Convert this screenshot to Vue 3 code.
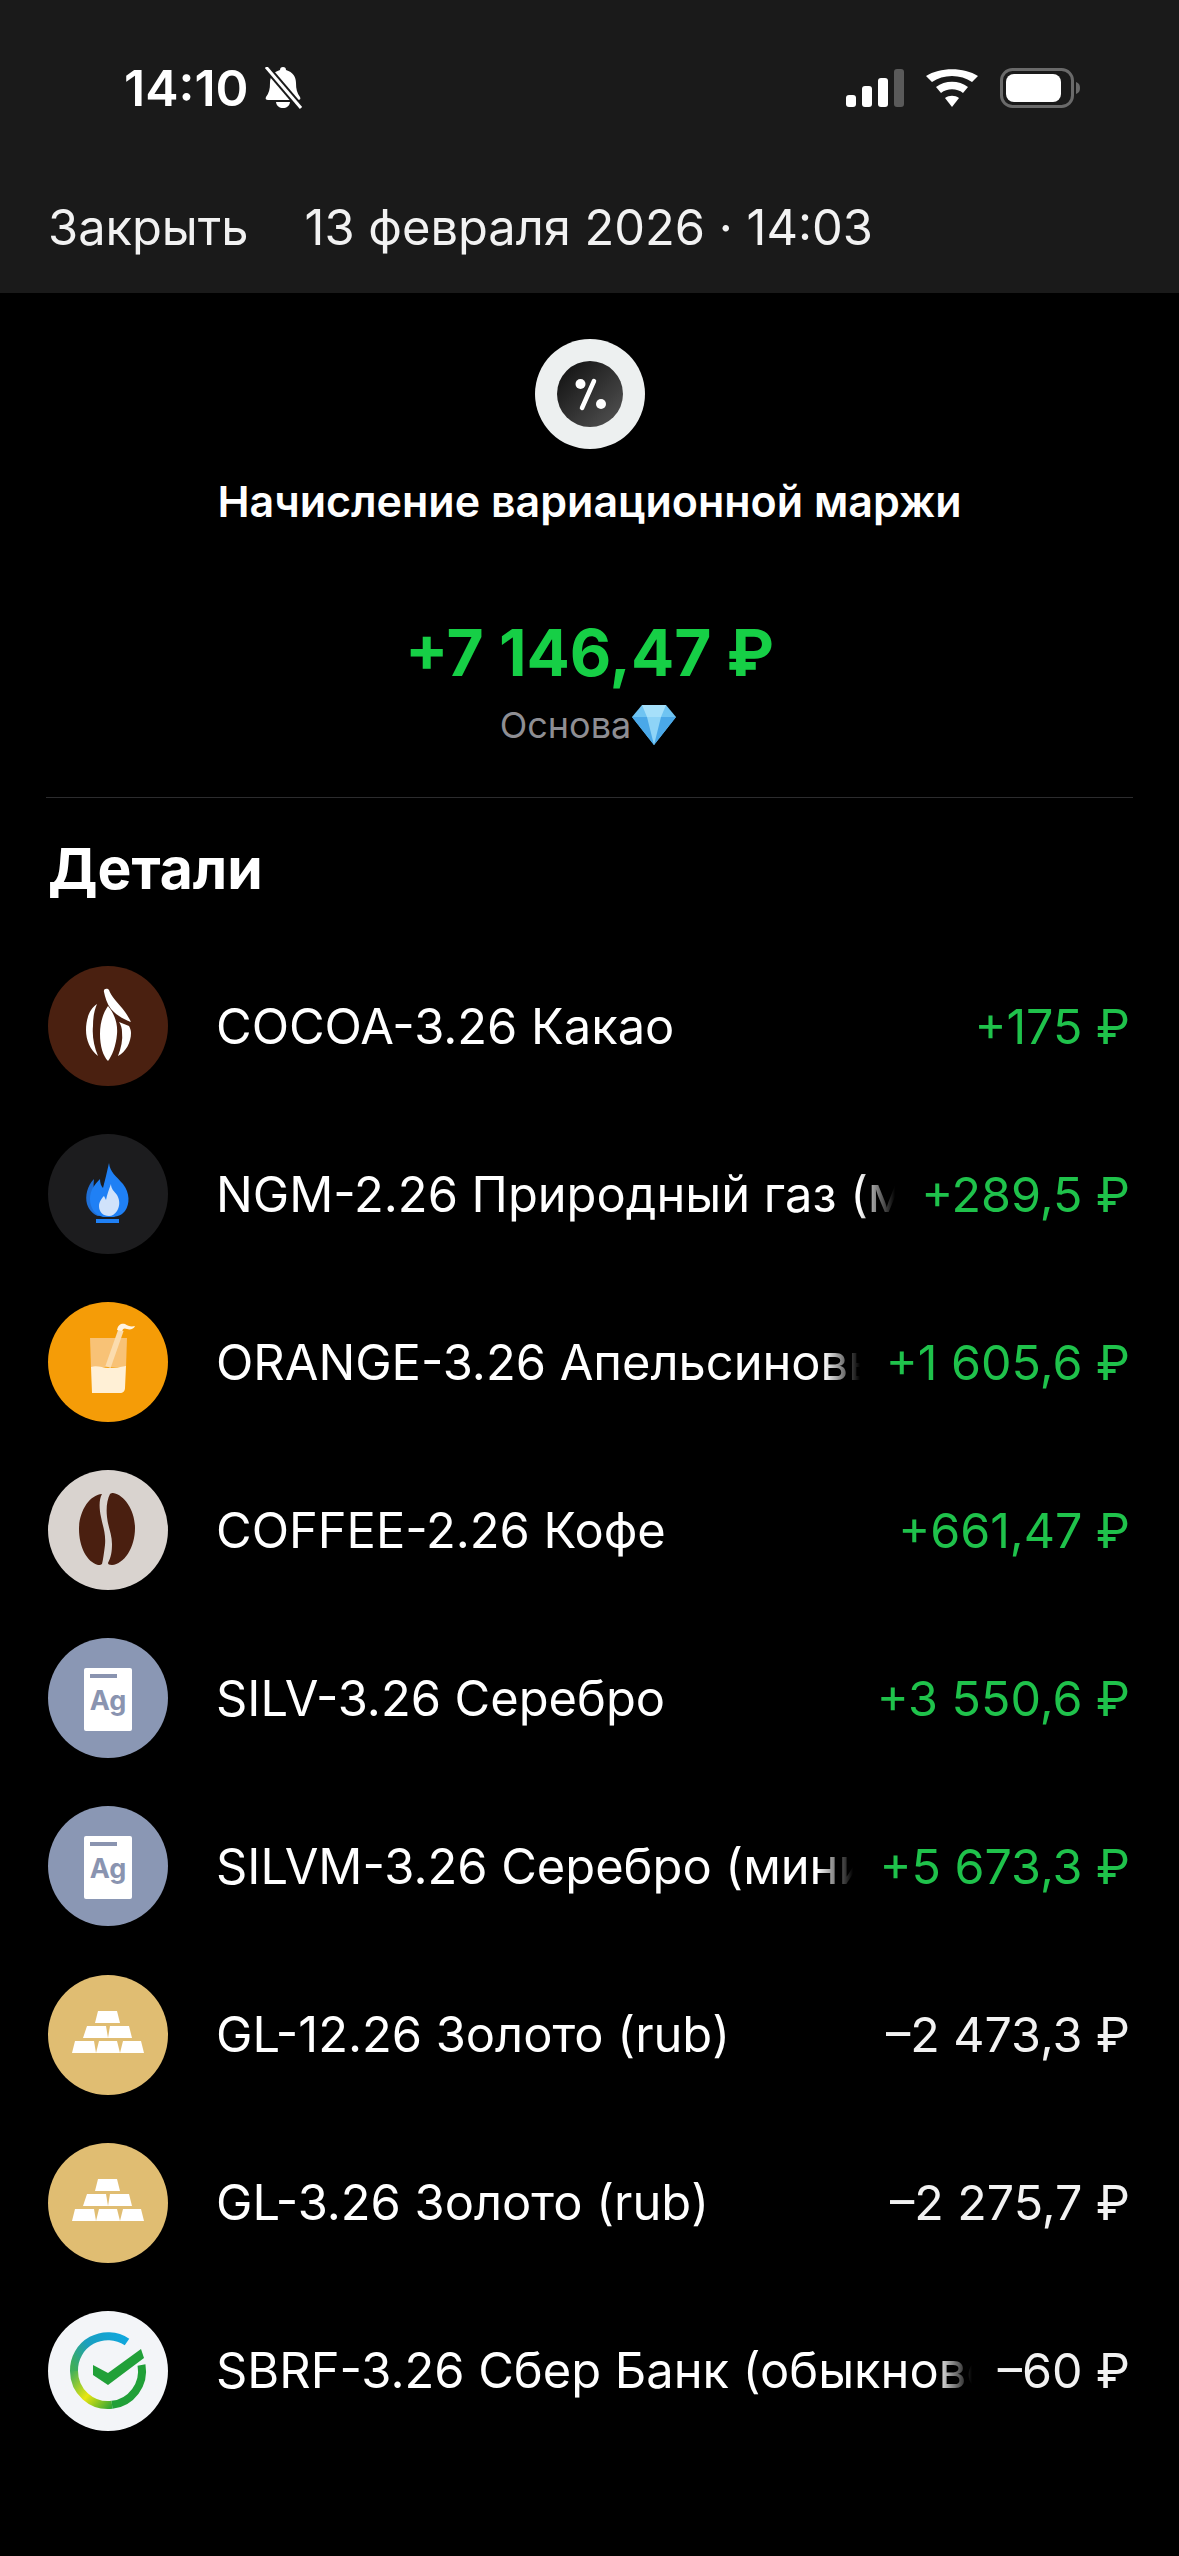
<template>
  <div class="screen">
    <header class="top">
      <div class="status">
        <div class="status-left">
          <span class="time">14:10</span>
          <svg class="bell" width="42" height="42" viewBox="0 0 42 42">
            <path d="M21 0c-2 0-3 1.200-3 3C11 5 8 10 8 16c0 6-1 10-4 14-1 2 0 3 2 3h30c2 0 3-1 2-3-3-4-4-8-4-14 0-6-3-11-10-13 0-1.800-1-3-3-3z" fill="#fff" />
            <path d="M14 35h14c-.5 4-3.500 6-7 6s-6.500-2-7-6z" fill="#fff" />
            <path d="M4 0l35 41" stroke="#1a1a1a" stroke-width="7" />
            <path d="M4 0l35 41" stroke="#fff" stroke-width="3" />
          </svg>
        </div>
        <div class="status-right">
          <svg width="58" height="38" viewBox="0 0 58 38">
            <rect x="0" y="26" width="10" height="12" rx="3" fill="#fff" />
            <rect x="16" y="17" width="10" height="21" rx="3" fill="#fff" />
            <rect x="32" y="9" width="10" height="29" rx="3" fill="#fff" />
            <rect x="48" y="0" width="10" height="38" rx="3" fill="#5a5a5a" />
          </svg>
          <svg width="52" height="38" viewBox="0 0 52 38">
            <path d="M26 38l-7-9c4-3 10-3 14 0z" fill="#fff" />
            <path d="M15 24l-5-6c9-7 23-7 32 0l-5 6c-6-5-16-5-22 0z" fill="#fff" />
            <path d="M6 13L0 7c14-9 38-9 52 0l-6 6c-11-8-29-8-40 0z" fill="#fff" />
          </svg>
          <svg width="81" height="40" viewBox="0 0 81 40">
            <rect x="1.500" y="1.500" width="71" height="37" rx="11" fill="none" stroke="#6a6a6a" stroke-width="3" />
            <rect x="6" y="6" width="55" height="28" rx="8" fill="#fff" />
            <path d="M76 14c3 1 4 3 4 6s-1 5-4 6z" fill="#6a6a6a" />
          </svg>
        </div>
      </div>
      <div class="nav">
        <span>Закрыть</span>
        <span>13 февраля 2026 · 14:03</span>
      </div>
    </header>

    <main class="content">
      <section class="summary">
        <div class="op-icon">
          <svg width="66" height="66" viewBox="0 0 66 66">
            <defs>
              <linearGradient id="opbg" x1="0" y1="0" x2="1" y2="1">
                <stop offset="0" stop-color="#0d0d0d" />
                <stop offset="1" stop-color="#555" />
              </linearGradient>
            </defs>
            <circle cx="33" cy="33" r="33" fill="url(#opbg)" />
            <circle cx="23.500" cy="23" r="5" fill="#fff" />
            <circle cx="44" cy="43" r="5" fill="#fff" />
            <path d="M37 20L25 47" stroke="#fff" stroke-width="4.500" stroke-linecap="round" />
          </svg>
        </div>
        <h1 class="title">Начисление вариационной маржи</h1>
        <div class="total">+7 146,47 ₽</div>
        <div class="account">
          <span>Основа</span>
          <svg width="46" height="42" viewBox="0 0 46 42">
            <path d="M11 1h24l10 12-22 28L1 13z" fill="#6fc4f2" />
            <path d="M1 13h44L23 41z" fill="#4aa8e8" />
            <path d="M11 1l5 12h14l5-12z" fill="#a6e0fa" />
            <path d="M16 13h14l-7 28z" fill="#8ed4f7" />
          </svg>
        </div>
      </section>

      <h2 class="details-title">Детали</h2>
      <ul class="rows">
        <li v-for="row in rows" :key="row.name" class="row">
          <svg class="ticker" width="120" height="120" viewBox="0 0 120 120">
            <template v-if="row.icon === 'cocoa'">
              <circle cx="60" cy="60" r="60" fill="#4a2010" />
              <path d="M60 40C66 47 70 57 69 68 68 80 64 90 60 95 55 90 52 80 52 68 52 57 55 47 60 40z" fill="#fff" />
              <path d="M49 38C41 43 38 54 38 64 38 74 42 84 50 90 46 80 44 70 45 60 45 52 46 45 49 38z" fill="#fff" />
              <path d="M71 56C73 59 74 62 74 66 75 74 73 82 70 90 78 86 83 76 83 67 83 64 82 62 81 60z" fill="#fff" />
              <path d="M56 26c-1-4 4-4 5-2 2 6 8 12 13 18 4 5 7 10 9 14-8-3-15-7-20-13-4-5-6-12-7-17z" fill="#fff" />
            </template>
            <template v-else-if="row.icon === 'gas'">
              <circle cx="60" cy="60" r="60" fill="#1c1c1e" />
              <path d="M46 45c-7 7-9 17-7 25 2 6 6 10 11 12l6-1c-7-6-12-21-10-36z" fill="#1f6fd6" />
              <path d="M61 29c1 9 7 13 14 21 7 9 7 20 2 27-3 4-7 5-11 6H55c-8-2-13-9-13-18 0-9 5-15 10-20 0 4 1 7 3 9 2-8 4-16 6-25z" fill="#1f80f5" />
              <path d="M63 50c0 5 3 7 6 11 3 5 3 11 0 16-2 3-5 5-8 5-6 0-10-4-10-10 0-4 3-8 5-10l2 4c1-5 3-11 5-16z" fill="#d0e2fb" />
              <rect x="48" y="85" width="23" height="4" fill="#1f80f5" />
            </template>
            <template v-else-if="row.icon === 'orange'">
              <circle cx="60" cy="60" r="60" fill="#f59c07" />
              <path d="M42 36h37l-1 29H43z" fill="#f8c276" />
              <path d="M43 65c6-2 11 1 18 1 6 0 11-1 17-2l-1 22c0 3-2 5-5 5H44z" fill="#fff0d6" />
              <path d="M60 65l13-37" stroke="#fbdcae" stroke-width="5.500" />
              <path d="M69 28c1-6 5-7 8-6 3 2 6 3 10 2-1 3-5 4-8 3-2-1-4-1-5 2z" fill="#fff4e2" />
            </template>
            <template v-else-if="row.icon === 'coffee'">
              <circle cx="60" cy="60" r="60" fill="#d9d3cf" />
              <path d="M54 24c-3 5-3 14-1 23 2 10 5 17 4 28-1 8-2 15-3 19-1 1-3 1-4 1-11-3-19-18-19-36 0-17 10-34 23-35z" fill="#4a1f10" />
              <path d="M65 23c12 2 22 18 22 35 0 20-11 36-23 37-3 0-4-1-4-2 3-6 4-11 4-19 0-10-4-17-5-27-1-9 0-17 3-23 1-1 2-1 3-1z" fill="#4a1f10" />
            </template>
            <template v-else-if="row.icon === 'silver'">
              <circle cx="60" cy="60" r="60" fill="#8a97b4" />
              <rect x="36" y="30" width="48" height="63" rx="2" fill="#fff" />
              <rect x="42" y="36" width="27" height="4" fill="#8a94b0" />
              <text x="60" y="72" text-anchor="middle" class="ag">Ag</text>
            </template>
            <template v-else-if="row.icon === 'gold'">
              <circle cx="60" cy="60" r="60" fill="#e0bd72" />
              <path d="M50 36h19l3 12H47z" fill="#fff" />
              <path d="M39 51h19l2 12H35z" fill="#fff" />
              <path d="M62 51h19l3 12H60z" fill="#fff" />
              <path d="M27 66h19l2 12H24z" fill="#fff" />
              <path d="M51 66h18l3 12H48z" fill="#fff" />
              <path d="M75 66h18l3 12H72z" fill="#fff" />
            </template>
            <template v-else>
              <circle cx="60" cy="60" r="60" fill="#f3f5f8" />
              <defs>
                <linearGradient id="sberA" gradientUnits="userSpaceOnUse" x1="80" y1="25" x2="28" y2="60">
                  <stop offset="0" stop-color="#0fa8e0" />
                  <stop offset="0.6" stop-color="#1a9fc0" />
                  <stop offset="1" stop-color="#3fae5a" />
                </linearGradient>
                <linearGradient id="sberB" gradientUnits="userSpaceOnUse" x1="28" y1="55" x2="70" y2="92">
                  <stop offset="0" stop-color="#3fae5a" />
                  <stop offset="0.5" stop-color="#e8e610" />
                  <stop offset="1" stop-color="#21a038" />
                </linearGradient>
              </defs>
              <path d="M79 31A34 34 0 0 0 26 60" fill="none" stroke="url(#sberA)" stroke-width="8" />
              <path d="M26 60A34 34 0 0 0 64 93.800" fill="none" stroke="url(#sberB)" stroke-width="8" />
              <path d="M64 93.800A34 34 0 0 0 93.500 54" fill="none" stroke="#21a038" stroke-width="8" />
              <path d="M45 64l15 10 36-27-3-9-33 24-15-8z" fill="#21a038" />
            </template>
          </svg>
          <span class="name">{{ row.name }}</span>
          <span class="amount" :class="{ plus: row.amount[0] === '+' }">{{ row.amount }}</span>
        </li>
      </ul>
    </main>
  </div>
</template>

<script setup>
const rows = [
  { icon: 'cocoa', name: 'COCOA-3.26 Какао', amount: '+175 ₽' },
  { icon: 'gas', name: 'NGM-2.26 Природный газ (мини)', amount: '+289,5 ₽' },
  { icon: 'orange', name: 'ORANGE-3.26 Апельсиновый сок', amount: '+1 605,6 ₽' },
  { icon: 'coffee', name: 'COFFEE-2.26 Кофе', amount: '+661,47 ₽' },
  { icon: 'silver', name: 'SILV-3.26 Серебро', amount: '+3 550,6 ₽' },
  { icon: 'silver', name: 'SILVM-3.26 Серебро (мини)', amount: '+5 673,3 ₽' },
  { icon: 'gold', name: 'GL-12.26 Золото (rub)', amount: '–2 473,3 ₽' },
  { icon: 'gold', name: 'GL-3.26 Золото (rub)', amount: '–2 275,7 ₽' },
  { icon: 'sber', name: 'SBRF-3.26 Сбер Банк (обыкновенные)', amount: '–60 ₽' },
];
</script>

<style>
html, body {
  background: #000;
}
</style>

<style scoped>
.screen {
  width: 1179px;
  min-height: 2556px;
  background: #000;
  color: #fff;
  font-family: Inter, "Liberation Sans", sans-serif;
}

.top {
  height: 293px;
  background: #1a1a1a;
  padding: 66px 48px 0 48px;
  box-sizing: border-box;
}

.status {
  display: flex;
  justify-content: space-between;
  align-items: center;
  padding: 0 50px 0 76px;
  height: 44px;
}

.status-left {
  display: flex;
  align-items: center;
  gap: 13px;
}

.time {
  font-size: 50px;
  font-weight: 600;
}

.status-right {
  display: flex;
  align-items: center;
  gap: 22px;
}

.nav {
  display: flex;
  gap: 56px;
  margin-top: 90px;
  font-size: 48.800px;
  line-height: 56px;
  color: #f2f2f2;
}

.content {
  padding: 46px 46px 0 46px;
}

.summary {
  display: flex;
  flex-direction: column;
  align-items: center;
  border-bottom: 1px solid #2c2c2e;
  height: 458px;
}

.op-icon {
  width: 110px;
  height: 110px;
  border-radius: 50%;
  background: #edf0f0;
  display: flex;
  align-items: center;
  justify-content: center;
  flex-shrink: 0;
}

.title {
  margin: 27px 0 0;
  font-size: 43px;
  line-height: 50px;
  font-weight: 600;
}

.total {
  margin-top: 88px;
  font-size: 64px;
  line-height: 78px;
  font-weight: 700;
  color: #16cf46;
}

.account {
  display: flex;
  align-items: center;
  gap: 0;
  margin-top: 11px;
  margin-right: 2px;
  font-size: 36px;
  line-height: 44px;
  color: #8e8e93;
}

.details-title {
  margin: 36px 0 0 2px;
  font-size: 57px;
  line-height: 70px;
  font-weight: 700;
}

.rows {
  list-style: none;
  margin: 62px 0 0 2px;
  padding: 0;
  display: flex;
  flex-direction: column;
  gap: 48.100px;
}

.row {
  display: flex;
  align-items: center;
  height: 120px;
}

.ticker {
  flex-shrink: 0;
  margin-right: 48px;
}

.ag {
  font-family: Inter, sans-serif;
  font-size: 27px;
  font-weight: 700;
  fill: #8a94b0;
}

.name {
  flex: 1;
  min-width: 0;
  white-space: nowrap;
  overflow: hidden;
  font-size: 48.800px;
  -webkit-mask-image: linear-gradient(to left, transparent 0, #000 36px);
  mask-image: linear-gradient(to left, transparent 0, #000 36px);
}

.amount {
  flex-shrink: 0;
  padding: 0 3px 0 26px;
  white-space: nowrap;
  font-size: 48.400px;
  color: #f2f2f2;
}

.plus {
  color: #1fc24b;
}
</style>
